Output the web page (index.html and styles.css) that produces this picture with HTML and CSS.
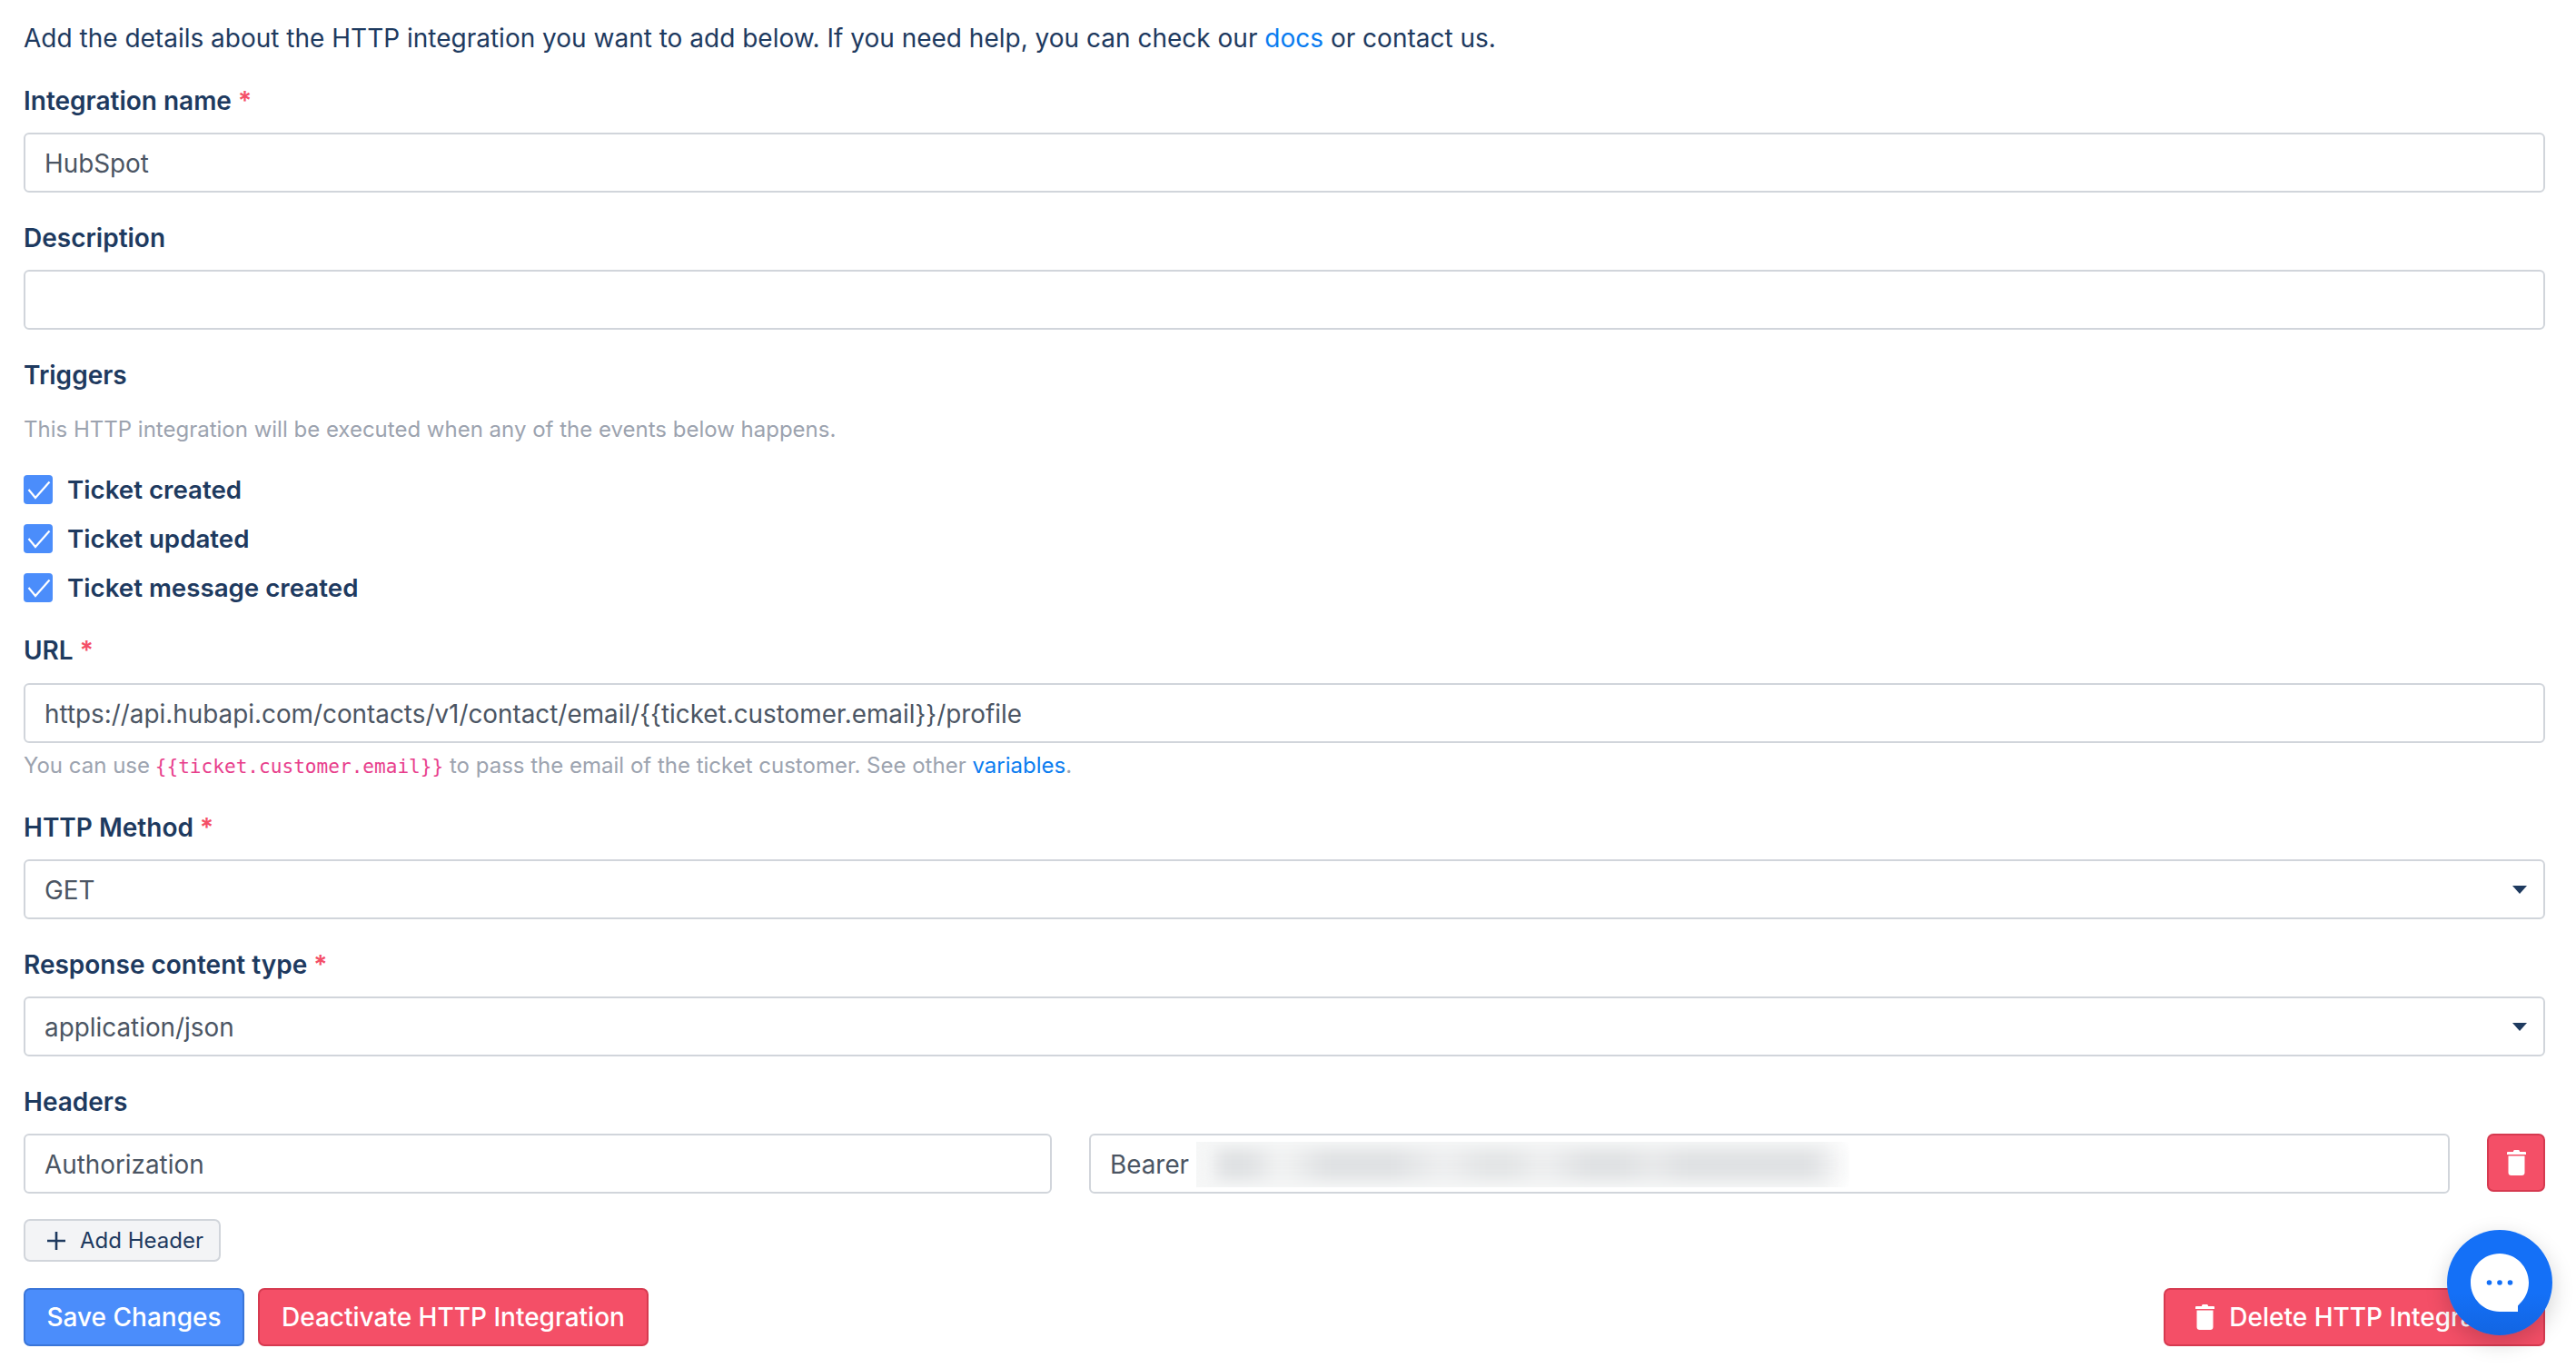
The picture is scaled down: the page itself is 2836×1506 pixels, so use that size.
FILE: index.html
```html
<!DOCTYPE html>
<html lang="en">
<head>
<meta charset="utf-8">
<title>HTTP Integration</title>
<link rel="stylesheet" href="styles.css">
</head>
<body>
<svg class="defs" width="0" height="0" aria-hidden="true">
  <symbol id="trash" viewBox="0 0 21 28">
    <path d="M7 1.6C7 .7 7.7 0 8.6 0h3.8c.9 0 1.6.7 1.6 1.6V2h6c.6 0 1 .3 1 .8V5H0V2.800C0 2.300.4 2 1 2h6z"/>
    <path d="M1.500 6.500h18V25c0 1.700-1.300 3-3 3h-12c-1.700 0-3-1.300-3-3z"/>
  </symbol>
</svg>
<main class="page">
  <p class="intro">Add the details about the HTTP integration you want to add below. If you need help, you can check our <a href="#">docs</a> or contact us.</p>

  <section class="group">
    <div class="label">Integration name <span class="req">*</span></div>
    <div class="field">HubSpot</div>
  </section>

  <section class="group">
    <div class="label">Description</div>
    <div class="field"></div>
  </section>

  <section class="group triggers">
    <div class="label">Triggers</div>
    <p class="hint hint-triggers">This HTTP integration will be executed when any of the events below happens.</p>
    <div class="check-row"><span class="check"><svg viewBox="0 0 32 32"><path d="M5.500 16l7.500 9L28.500 7.500"/></svg></span>Ticket created</div>
    <div class="check-row"><span class="check"><svg viewBox="0 0 32 32"><path d="M5.500 16l7.500 9L28.500 7.500"/></svg></span>Ticket updated</div>
    <div class="check-row"><span class="check"><svg viewBox="0 0 32 32"><path d="M5.500 16l7.500 9L28.500 7.500"/></svg></span>Ticket message created</div>
  </section>

  <section class="group group-url">
    <div class="label label-url">URL <span class="req">*</span></div>
    <div class="field">https://api.hubapi.com/contacts/v1/contact/email/{{ticket.customer.email}}/profile</div>
    <p class="hint hint-url">You can use <code>{{ticket.customer.email}}</code> to pass the email of the ticket customer. See other <a href="#">variables</a>.</p>
  </section>

  <section class="group group-method">
    <div class="label">HTTP Method <span class="req">*</span></div>
    <div class="field select">GET<span class="caret"></span></div>
  </section>

  <section class="group">
    <div class="label">Response content type <span class="req">*</span></div>
    <div class="field select">application/json<span class="caret"></span></div>
  </section>

  <section class="group">
    <div class="label">Headers</div>
    <div class="header-row">
      <div class="field">Authorization</div>
      <div class="field">Bearer<span class="redacted"><span class="redacted-ink"></span></span></div>
      <button class="btn danger icon-only" type="button"><svg class="trash"><use href="#trash"/></svg></button>
    </div>
  </section>

  <button class="btn add" type="button"><svg viewBox="0 0 22 22"><path d="M11 1v20M1 11h20"/></svg>Add Header</button>

  <div class="actions">
    <div class="actions-left">
      <button class="btn primary" type="button">Save Changes</button>
      <button class="btn danger" type="button">Deactivate HTTP Integration</button>
    </div>
    <button class="btn danger delete" type="button"><svg class="trash"><use href="#trash"/></svg>Delete HTTP Integration</button>
  </div>
</main>
<div class="chat">
  <svg viewBox="0 0 116 116">
    <path class="bubble" d="M58 26c17.700 0 32 14.300 32 32 0 9.500-4.100 18-10.700 23.900L78 83.500V90H58c-17.700 0-32-14.300-32-32s14.300-32 32-32z"/>
    <circle class="dot" cx="46.500" cy="58" r="2.800"/>
    <circle class="dot" cx="58" cy="58" r="2.800"/>
    <circle class="dot" cx="69.500" cy="58" r="2.800"/>
  </svg>
</div>
</body>
</html>
```
FILE: styles.css
```css
* { box-sizing: border-box; }
html, body { margin: 0; height: 100%; background: #fff; overflow: hidden; }
body { font-family: Inter, "Noto Sans", sans-serif; color: #1e3a5f; font-size: 28px; position: relative; }
.defs { position: absolute; }
.page { padding: 20px 34px 0 26px; }
a { color: #0a7cf0; text-decoration: none; }
.intro { margin: 0 0 25px; line-height: 44px; }
.group { margin-bottom: 28px; }
.group-url { margin-bottom: 25px; }
.triggers { margin-bottom: 20px; }
.label { font-weight: 600; line-height: 44px; margin-bottom: 13px; }
.label-url { margin-bottom: 14px; }
.triggers .label { margin-bottom: 18px; }
.req { color: #f44f67; }
.field { height: 66px; border: 2px solid #d1d5db; border-radius: 6px; padding: 1px 21px 0; display: flex; align-items: center; color: #4b5563; background: #fff; white-space: nowrap; font-size: 27.850px; }
.select { justify-content: space-between; padding-right: 18px; }
.caret { width: 0; height: 0; border-left: 8.500px solid transparent; border-right: 8.500px solid transparent; border-top: 9px solid #1e3a5f; }
.hint { margin: 0; font-size: 24px; line-height: 40px; color: #9ca3af; }
.hint-triggers { margin-bottom: 19px; }
.hint-url { margin-top: 5px; }
code { font-family: "DejaVu Sans Mono", monospace; font-size: 21.100px; color: #e83e8c; margin-left: -1px; }
.check-row { height: 54px; display: flex; align-items: center; gap: 16px; font-weight: 600; font-size: 27.700px; }
.check { width: 32px; height: 32px; border-radius: 4px; background: #4b8dfb; display: block; }
.check svg { display: block; width: 32px; height: 32px; fill: none; stroke: #fff; stroke-width: 2.200; }
.header-row { display: grid; grid-template-columns: 1132px 1fr 64px; column-gap: 41px; align-items: start; }
.redacted { display: block; width: 719px; height: 50px; margin-left: 8px; overflow: hidden; background: linear-gradient(90deg, #f6f7f7 96%, #fff); }
.redacted-ink { display: block; width: 100%; height: 100%; filter: blur(8px); background: linear-gradient(90deg, #f6f7f7 0 2%, #dfe1e3 4% 8%, #f2f3f3 13%, #dfe1e3 20% 30%, #eeeff0 38%, #e3e5e6 44% 48%, #eeeff0 53%, #dfe1e3 60% 65%, #e8e9ea 70%, #dfe1e3 75% 94%, #fdfdfd 100%) 0 50% / 100% 34px no-repeat; }
.btn { font: inherit; font-weight: 500; height: 64px; border-radius: 7px; border: 2px solid transparent; display: inline-flex; align-items: center; justify-content: center; padding: 0 24px; color: #fff; cursor: pointer; white-space: nowrap; }
.primary { background: #4b8dfb; border-color: #3a75d8; padding: 0 23.500px; }
.danger { background: #f44f67; border-color: #d63a50; }
.trash { width: 21px; height: 28px; fill: #fff; flex: none; }
.icon-only { width: 64px; padding: 0; }
.add { height: 47px; margin: 0 0 29px; padding: 0 17px 0 23px; gap: 15px; background: #f3f4f6; border-color: #d1d5db; color: #1e3a5f; font-size: 24px; font-weight: 400; }
.add svg { width: 22px; height: 22px; fill: none; stroke: #1e3a5f; stroke-width: 2.600; }
.actions { display: flex; justify-content: space-between; }
.actions-left { display: flex; gap: 15px; }
.delete { gap: 16px; padding: 0 25px 0 33px; }
.chat { position: absolute; left: 2694px; top: 1354px; width: 116px; height: 116px; border-radius: 50%; background: linear-gradient(180deg, #1470f7 60%, #1265e2); box-shadow: 0 8px 24px rgba(0, 0, 0, .18); }
.chat svg { display: block; width: 116px; height: 116px; }
.bubble { fill: #fff; }
.dot { fill: #1470f7; }
```
